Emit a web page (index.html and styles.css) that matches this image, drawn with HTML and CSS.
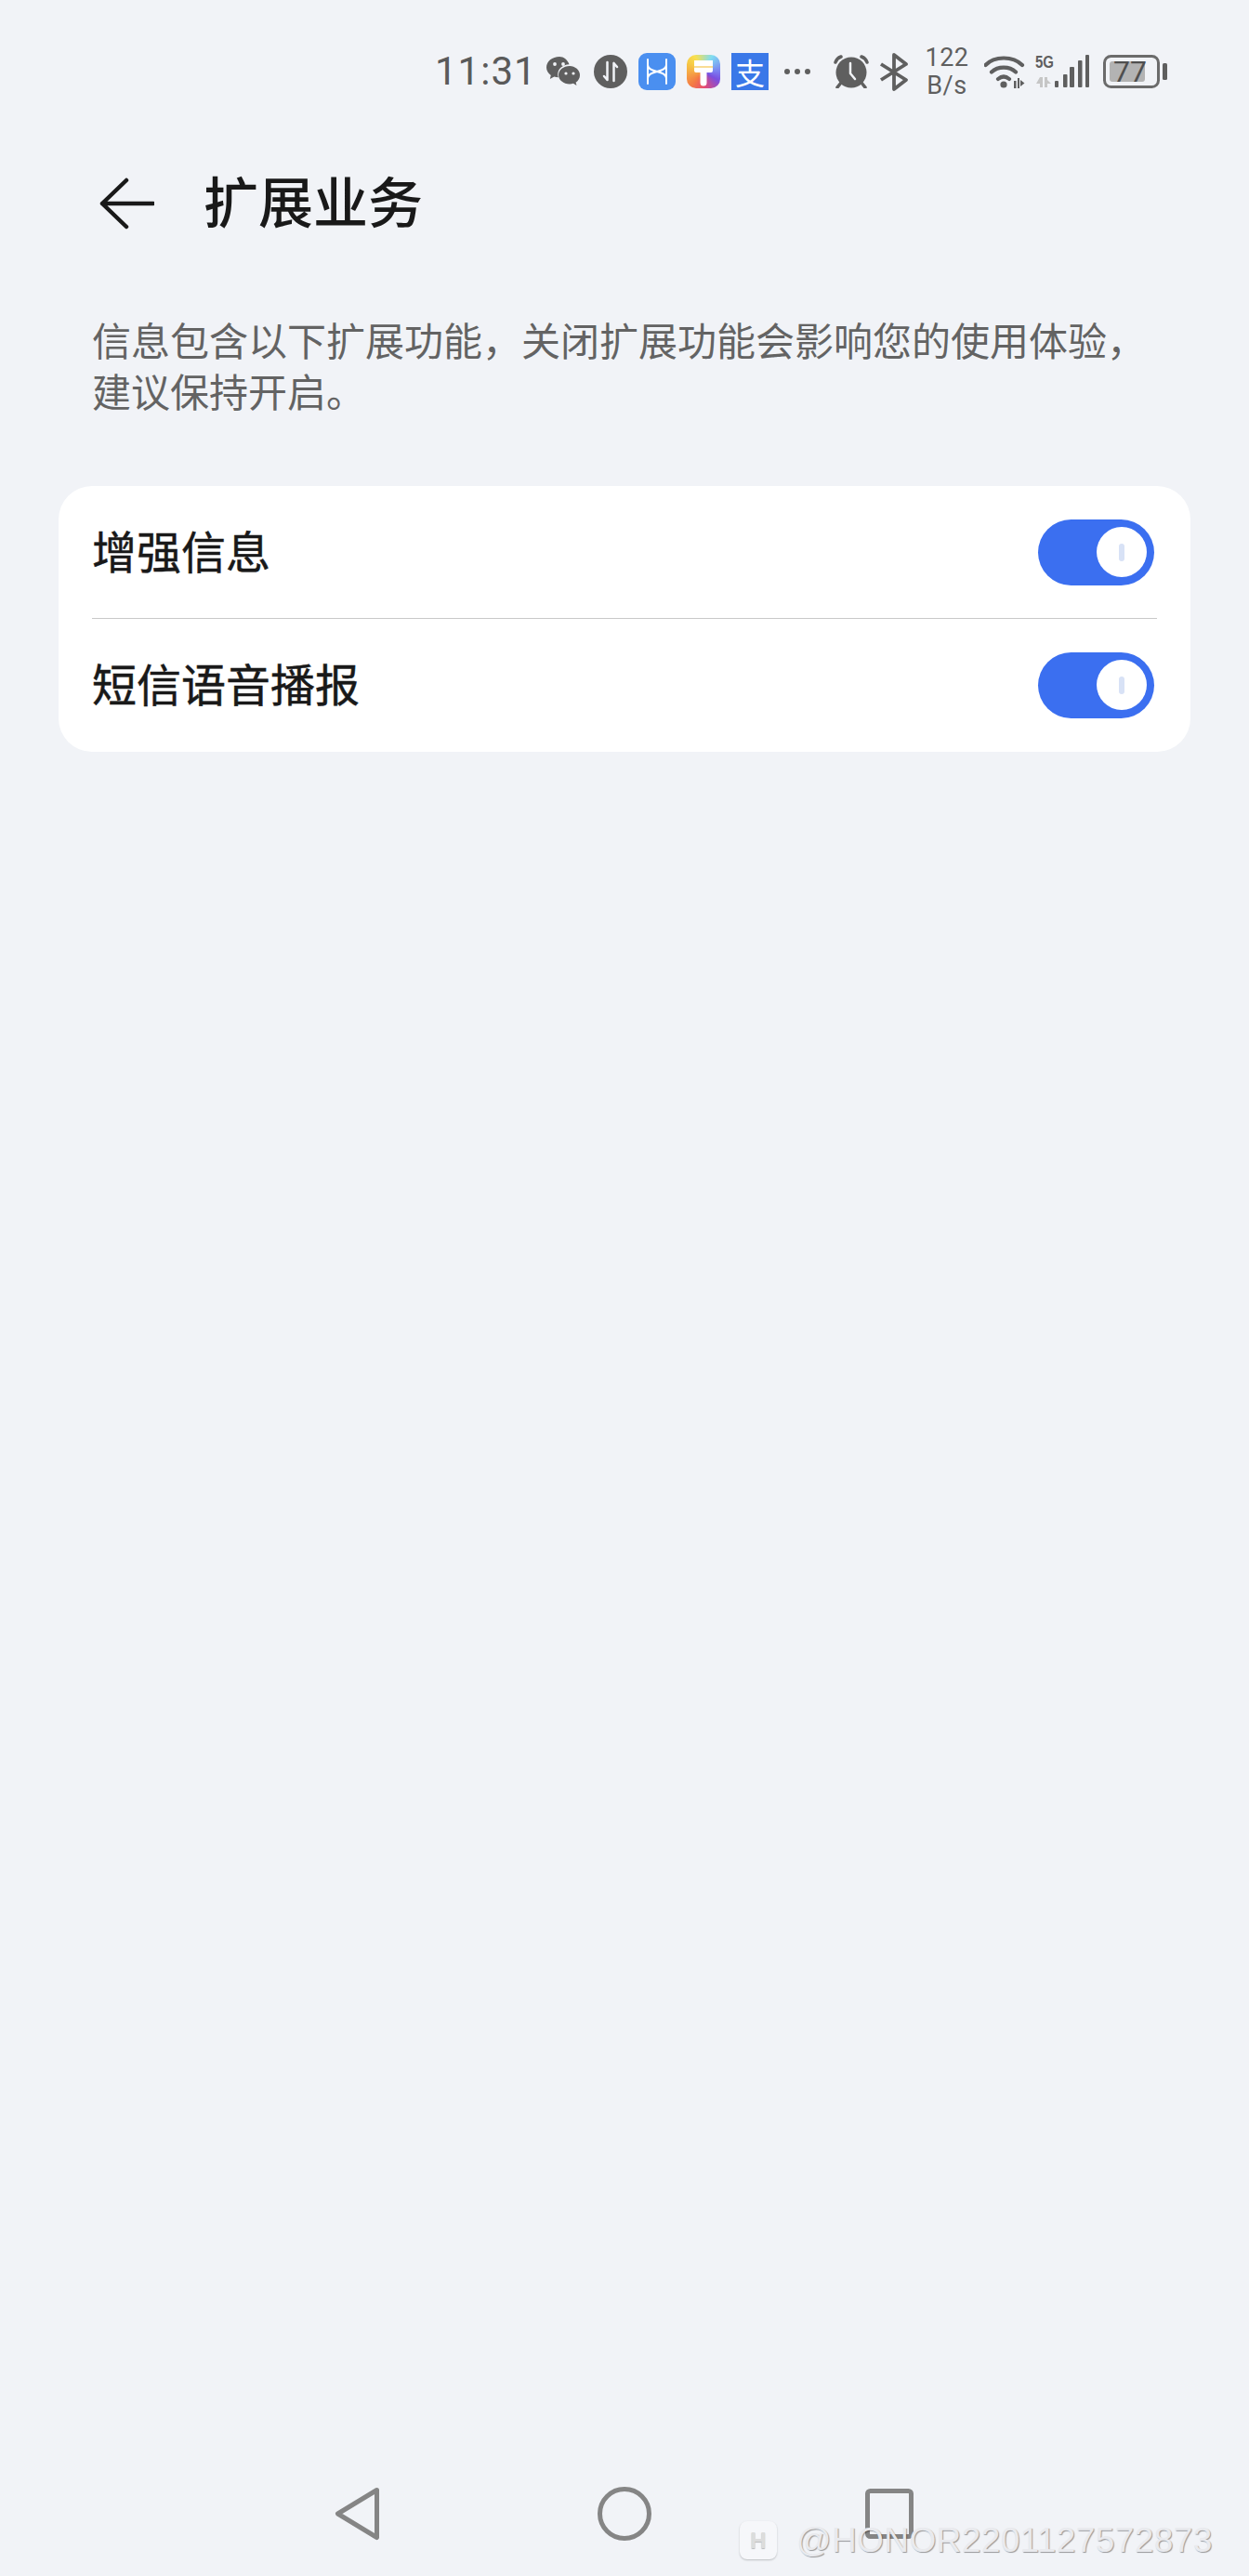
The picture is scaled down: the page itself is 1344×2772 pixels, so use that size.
FILE: index.html
```html
<!DOCTYPE html>
<html lang="zh-CN">
<head>
<meta charset="utf-8">
<title>扩展业务</title>
<link rel="stylesheet" href="styles.css">
</head>
<body>
<div class="page">
  <div class="statusbar">
    <span class="time">11:31</span>
    <svg class="ic ml16" width="37" height="32" viewBox="0 0 37 32"><path class="g" d="M14 0C6.300 0 0 5 0 11.500c0 3.500 1.900 6.500 4.800 8.600L3.800 24l4.500-2.500c1.500.5 3 .8 4.500.8-.4-1.100-.6-2.200-.6-3.300C12.200 13 17.600 8.500 24.500 8.200 22.800 3.400 18.500 0 14 0z"/><circle class="bgc" cx="9" cy="8" r="1.900"/><circle class="bgc" cx="18" cy="8" r="1.900"/><path class="g" d="M25 10c-6.600 0-12 4.300-12 9.700s5.400 9.700 12 9.700c1.400 0 2.700-.2 3.900-.6l3.600 2.200-.9-3.300c2.700-1.800 4.400-4.700 4.400-8 0-5.400-5.400-9.700-11-9.700z"/><circle class="bgc" cx="21" cy="18" r="1.600"/><circle class="bgc" cx="29" cy="18" r="1.600"/></svg>
    <svg class="ic ml14" width="36" height="36" viewBox="0 0 36 36"><circle class="g" cx="18" cy="18" r="18"/><path class="wl" d="M14.500 8v19M14.500 27l-3.500-4M21.500 28V9M21.500 9l3.500 4"/></svg>
    <svg class="ic ml12" width="40" height="40" viewBox="0 0 40 40"><rect width="40" height="40" rx="9" fill="#4a8ff0"/><path class="wt" d="M10 7v26M30 7v26M10 13c1 9 19 5 20 14M30 13c-1 9-19 5-20 14"/></svg>
    <div class="paint ml12"><svg width="36" height="36" viewBox="0 0 36 36"><path fill="#fff" d="M8 6h20v11a2 2 0 0 1-2 2h-4.500v11a3.500 3.500 0 0 1-7 0V19H10a2 2 0 0 1-2-2z"/><rect x="8" y="12" width="20" height="2" fill="#f7d070" opacity=".75"/></svg></div>
    <div class="alipay ml12">支</div>
    <svg class="ic ml16" width="30" height="8" viewBox="0 0 30 8"><circle class="g" cx="4" cy="4" r="3"/><circle class="g" cx="15" cy="4" r="3"/><circle class="g" cx="26" cy="4" r="3"/></svg>
    <svg class="ic ml24" width="38" height="36" viewBox="0 0 38 36"><circle class="g" cx="19" cy="19" r="16.500"/><path class="wa" d="M18 9v11l5 6"/><path class="gs" d="M2 8c1-3 3-5 6-6M36 8c-1-3-3-5-6-6M8 30l-4 5M30 30l4 5"/></svg>
    <svg class="ic ml11" width="32" height="41" viewBox="0 0 32 41"><path class="gs2" d="M2 12l27 17-13 10V2l13 10L2 29"/></svg>
    <div class="speed"><span>122</span><span>B/s</span></div>
    <svg class="ic ml15" width="45" height="38" viewBox="0 0 45 38"><path class="gs3" d="M1.500 12C11 2 31 2 41 12M8 19.500c7-6.500 19-6.500 26 0M15 27c4-3.300 8-3.300 12 0"/><circle class="g" cx="21" cy="33" r="3.600"/><path class="g" d="M32 29h2.500v8H32zM36 26h2v11h-2zM39 28l4.500 3.500L39 35z"/></svg>
    <svg class="ic ml10" width="58" height="42" viewBox="0 -2 58 42"><text x="0" y="15" class="fiveg" textLength="20" lengthAdjust="spacingAndGlyphs">5G</text><path class="gl" d="M5 25h3v11H5zM5 25v7H1zM10 25h3v11h-3zM13 28l4 4h-4z"/><rect class="g" x="21" y="29" width="4" height="7" rx="1"/><rect class="g" x="30" y="22" width="4.500" height="14" rx="1"/><rect class="g" x="37" y="14" width="5" height="22" rx="1"/><rect class="g" x="46" y="7" width="4.500" height="29" rx="1"/><rect class="g" x="54" y="1" width="4" height="35" rx="1"/></svg>
    <svg class="ic ml15" width="69" height="40" viewBox="0 -2 69 40"><rect x="1.500" y="1.500" width="58" height="33" rx="7" fill="none" stroke="#6b6b6b" stroke-width="3"/><rect x="7" y="7" width="38" height="22" rx="3" fill="#b3b3b3"/><rect x="64" y="9" width="5" height="18" rx="1.500" fill="#5f5f5f"/><text x="29" y="29" class="batt">77</text></svg>
  </div>

  <header class="header">
    <svg class="back" width="60" height="60" viewBox="0 0 60 60"><path d="M30 5L4 30l26 25M4 30h55" fill="none" stroke="#191919" stroke-width="4.500" stroke-linecap="round" stroke-linejoin="round"/></svg>
    <h1 class="title">扩展业务</h1>
  </header>

  <p class="desc">信息包含以下扩展功能，关闭扩展功能会影响您的使用体验，<br>建议保持开启。</p>

  <section class="card">
    <div class="row"><span class="label">增强信息</span><span class="toggle"><span class="knob"><i class="tick"></i></span></span></div>
    <div class="divider"></div>
    <div class="row"><span class="label">短信语音播报</span><span class="toggle"><span class="knob"><i class="tick"></i></span></span></div>
  </section>

  <nav class="nav">
    <div class="navcell"><svg width="50" height="60" viewBox="0 0 50 60"><path d="M45.500 4.500L3.500 30l42 25.500z" fill="none" stroke="#858585" stroke-width="5" stroke-linejoin="round"/></svg></div>
    <div class="navcell"><svg width="58" height="58" viewBox="0 0 58 58"><circle cx="29" cy="29" r="26.500" fill="none" stroke="#858585" stroke-width="5"/></svg></div>
    <div class="navcell"><svg class="navsq" width="52" height="54" viewBox="0 0 52 54"><rect x="2.500" y="2.500" width="47" height="49" rx="3" fill="none" stroke="#858585" stroke-width="5"/></svg></div>
  </nav>

  <div class="watermark">
    <span class="wm-badge">H</span>
    <span class="wm-text">@HONOR2201127572873</span>
  </div>
</div>
</body>
</html>
```
FILE: styles.css
```css
* { box-sizing: border-box; }
html, body { margin: 0; padding: 0; }
body {
  background: #f1f3f7;
  font-family: "Noto Sans CJK SC", "Noto Sans", sans-serif;
}
.page {
  position: relative;
  width: 1344px;
  height: 2772px;
  display: flex;
  flex-direction: column;
  overflow: hidden;
}

/* status bar */
.statusbar {
  height: 154px;
  flex: none;
  display: flex;
  align-items: center;
  padding-left: 468px;
}
.ic { display: block; flex: none; }
.time {
  font-family: Roboto, "Liberation Sans", sans-serif;
  font-size: 42px;
  letter-spacing: 1px;
  color: #5a5a5a;
  width: 104px;
  line-height: 1;
}
.ml10 { margin-left: 10px; }
.ml11 { margin-left: 11px; }
.ml12 { margin-left: 12px; }
.ml14 { margin-left: 14px; }
.ml15 { margin-left: 15px; }
.ml16 { margin-left: 16px; }
.ml24 { margin-left: 24px; }
.g { fill: #5f5f5f; }
.bgc { fill: #f1f3f7; }
.wl { fill: none; stroke: #f1f3f7; stroke-width: 2.500; stroke-linecap: round; stroke-linejoin: round; }
.wt { fill: none; stroke: #fff; stroke-width: 2; stroke-linecap: round; }
.wa { fill: none; stroke: #f1f3f7; stroke-width: 2.500; stroke-linecap: round; stroke-linejoin: round; }
.gs { fill: none; stroke: #5f5f5f; stroke-width: 3.500; stroke-linecap: round; }
.gs2 { fill: none; stroke: #5f5f5f; stroke-width: 3.800; stroke-linejoin: round; }
.gs3 { fill: none; stroke: #5f5f5f; stroke-width: 4.200; stroke-linecap: round; }
.gl { fill: #c6c6c6; }
.paint {
  width: 36px;
  height: 36px;
  flex: none;
  border-radius: 10px;
  overflow: hidden;
  background: conic-gradient(from 300deg, #f6c945 0deg, #f9e04f 30deg, #7fdcf2 90deg, #7b7cf0 150deg, #7a4fe0 180deg, #e64a74 235deg, #f47a44 280deg, #f6c945 360deg);
}
.paint svg { display: block; }
.alipay {
  width: 40px;
  height: 40px;
  flex: none;
  background: #3a78e8;
  color: #fff;
  font-size: 32px;
  line-height: 40px;
  text-align: center;
}
.speed {
  margin-left: 16px;
  width: 50px;
  display: flex;
  flex-direction: column;
  align-items: center;
  font-family: Roboto, "Liberation Sans", sans-serif;
  font-size: 27px;
  line-height: 30px;
  letter-spacing: .5px;
  color: #5f5f5f;
}
.fiveg {
  font-family: "Liberation Sans", sans-serif;
  font-size: 18px;
  font-weight: 700;
  fill: #5f5f5f;
}
.batt {
  font-family: Roboto, "Liberation Sans", sans-serif;
  font-size: 32px;
  fill: #4f4f4f;
  text-anchor: middle;
}

/* header */
.header {
  height: 130px;
  flex: none;
  display: flex;
  align-items: center;
  padding-left: 106px;
}
.back { display: block; flex: none; }
.title {
  margin: 0 0 8px 53px;
  font-size: 59px;
  font-weight: 500;
  line-height: 80px;
  color: #191919;
}

/* description */
.desc {
  margin: 0 0 5px;
  padding: 53px 63px 0 99px;
  font-size: 42px;
  line-height: 55px;
  color: #636363;
  flex: none;
}

/* card */
.card {
  margin: 71px 63px 0;
  padding: 0 36px 1px;
  background: #fff;
  border-radius: 36px;
  flex: none;
}
.row {
  height: 142px;
  display: flex;
  align-items: center;
  justify-content: space-between;
  padding-right: 3px;
}
.label {
  font-size: 48px;
  line-height: 64px;
  padding-bottom: 7px;
  color: #191919;
  -webkit-text-stroke: .5px #191919;
}
.divider { height: 1px; background: #c9c9c9; }
.toggle {
  width: 125px;
  height: 71px;
  border-radius: 36px;
  background: #3b6ff0;
  display: flex;
  align-items: center;
  justify-content: flex-end;
  padding-right: 8px;
}
.knob {
  width: 54px;
  height: 54px;
  border-radius: 50%;
  background: #fff;
  display: flex;
  align-items: center;
  justify-content: center;
}
.tick {
  width: 6px;
  height: 19px;
  border-radius: 3px;
  background: #d8e2f6;
}

/* navigation */
.nav {
  margin-top: auto;
  height: 134px;
  flex: none;
  display: flex;
  justify-content: center;
  align-items: center;
}
.navcell {
  width: 287px;
  display: flex;
  justify-content: center;
}
.navcell svg { display: block; }
.navcell .navsq { margin-right: 4px; }

/* watermark overlay */
.watermark {
  position: absolute;
  left: 796px;
  bottom: 18px;
  display: flex;
  align-items: center;
  gap: 21px;
}
.wm-badge {
  width: 40px;
  height: 41px;
  border-radius: 8px;
  background: #f6f7fa;
  box-shadow: 0 1px 2px rgba(0,0,0,.22);
  color: #dcdcdc;
  text-shadow: 0 1px 1px rgba(0,0,0,.25);
  font-family: "Liberation Sans", sans-serif;
  font-weight: 700;
  font-size: 24px;
  display: flex;
  align-items: center;
  justify-content: center;
}
.wm-text {
  font-family: "Liberation Sans", sans-serif;
  font-size: 37px;
  line-height: 41px;
  letter-spacing: .4px;
  color: #e9eaee;
  text-shadow: 1px 1px 1px rgba(0,0,0,.38);
}
```
